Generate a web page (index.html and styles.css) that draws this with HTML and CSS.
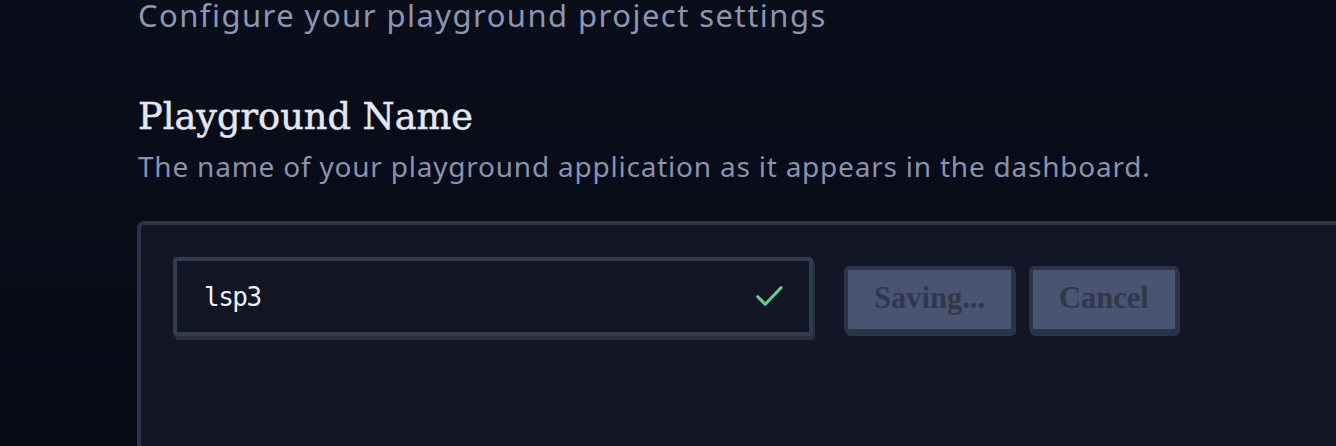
FILE: index.html
```html
<!DOCTYPE html>
<html lang="en">
<head>
<meta charset="utf-8">
<title>Playground Settings</title>
<link rel="stylesheet" href="styles.css">
</head>
<body>
<main class="page">
  <p class="page-subtitle">Configure your playground project settings</p>
  <section class="setting">
    <h2 class="setting-title">Playground Name</h2>
    <p class="setting-desc">The name of your playground application as it appears in the dashboard.</p>
    <div class="card">
      <div class="row">
        <div class="input-wrap">
          <input class="text-input" type="text" value="lsp3">
          <svg class="check" viewBox="0 0 24 24" width="36" height="36" aria-hidden="true">
            <path d="M4.5 12.5l5 5L20 6.5" fill="none" stroke="currentColor" stroke-width="2.1" stroke-linecap="round" stroke-linejoin="round"/>
          </svg>
        </div>
        <div class="actions">
          <button class="btn" type="button">Saving...</button>
          <button class="btn" type="button">Cancel</button>
        </div>
      </div>
    </div>
  </section>
</main>
</body>
</html>
```

FILE: styles.css
```css
* { box-sizing: border-box; }
html, body { margin: 0; padding: 0; }
body {
  width: 1336px;
  height: 446px;
  overflow: hidden;
  background: linear-gradient(180deg, #0a0e1a 0%, #060a15 100%);
  font-family: "Noto Sans", "Open Sans", sans-serif;
}
.page {
  padding-left: 138px;
}
.page-subtitle {
  margin: 0;
  font-size: 31px;
  line-height: 30px;
  letter-spacing: 1.45px;
  color: #8d95b1;
  white-space: nowrap;
}
.setting { margin-top: 65px; }
.setting-title {
  margin: 0;
  font-family: "DejaVu Serif", "Liberation Serif", serif;
  font-weight: 400;
  font-size: 36.7px;
  line-height: 44px;
  color: #e4e7f1;
  -webkit-text-stroke: 0.5px #e4e7f1;
  white-space: nowrap;
}
.setting-desc {
  margin: 9px 0 0;
  font-size: 28px;
  line-height: 36px;
  letter-spacing: 0.78px;
  color: #8a92ad;
  white-space: nowrap;
}
.card {
  margin-top: 37px;
  margin-left: -1px;
  width: 1220px;
  height: 240px;
  background: #121626;
  border: 4px solid #2b3445;
  border-radius: 7px;
  padding: 32px 0 0 32px;
}
.row {
  display: flex;
  align-items: flex-start;
  gap: 31px;
}
.input-wrap {
  position: relative;
  width: 640px;
  height: 79px;
  border: 4px solid #323c4f;
  border-radius: 4px;
  background: #111524;
  box-shadow: 2px 4px 0 #272f40;
}
.text-input {
  width: 100%;
  height: 100%;
  border: 0;
  outline: none;
  background: transparent;
  padding: 0 0 0 27px;
  font-family: "DejaVu Sans Mono", monospace;
  font-size: 26px;
  letter-spacing: -1.5px;
  color: #eef0f6;
}
.check {
  position: absolute;
  right: 22px;
  top: 17px;
  color: #62d08a;
}
.actions {
  display: flex;
  gap: 14px;
  margin-top: 9px;
}
.btn {
  height: 67px;
  padding: 0 26px 3px;
  border: 4px solid #2b3446;
  border-radius: 5px;
  background: #4a5470;
  box-shadow: 1px 3px 0 #2b3446;
  font-family: "Liberation Serif", serif;
  font-weight: 700;
  font-size: 30.5px;
  color: #2f394b;
}
```
